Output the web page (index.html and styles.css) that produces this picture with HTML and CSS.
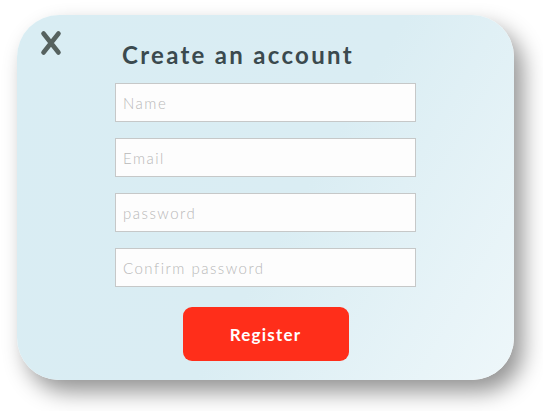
FILE: index.html
```html
<!DOCTYPE html>
<html>
<head>
<meta charset="utf-8">
<link rel="stylesheet" href="styles.css">
</head>
<body>
<div class="card">
  <button class="close" aria-label="Close">
    <svg width="22" height="26" viewBox="0 0 22 26"><path d="M3.5 3.5 L18.5 22.5 M18.5 3.5 L3.5 22.5" stroke="#56625f" stroke-width="4.6" stroke-linecap="round" fill="none"/></svg>
  </button>
  <h1 class="title">Create an account</h1>
  <form class="form">
    <input class="field" type="text" placeholder="Name">
    <input class="field" type="text" placeholder="Email">
    <input class="field" type="password" placeholder="password">
    <input class="field" type="password" placeholder="Confirm password">
    <button class="register" type="button">Register</button>
  </form>
</div>
</body>
</html>
```
FILE: styles.css
```css
html, body {
  margin: 0;
  padding: 0;
  background: #ffffff;
  font-family: Lato, "Open Sans", sans-serif;
}
body {
  min-height: 411px;
  overflow: hidden;
}
.card {
  position: relative;
  margin: 15px 0 0 17px;
  width: 497px;
  height: 365px;
  box-sizing: border-box;
  border-radius: 42px;
  background: linear-gradient(120deg, #d9edf3 0%, #daedf3 55%, #eef7fa 100%);
  box-shadow: 9px 12px 22px rgba(0, 0, 0, 0.42);
  padding-top: 25px;
}
.close {
  position: absolute;
  left: 23px;
  top: 15px;
  padding: 0;
  border: 0;
  background: none;
  line-height: 0;
}
.title {
  margin: 0 0 0 105px;
  font-size: 24px;
  font-weight: 700;
  letter-spacing: 2.3px;
  color: #3b4a4e;
  line-height: 30px;
}
.form {
  display: flex;
  flex-direction: column;
  align-items: center;
  gap: 16px;
  margin-top: 13px;
}
.field {
  width: 301px;
  height: 39px;
  box-sizing: border-box;
  border: 1px solid #c6c8c8;
  background: #fdfdfd;
  padding: 0 7px;
  font-family: Lato, sans-serif;
  font-weight: 300;
  font-size: 15px;
  letter-spacing: 1.5px;
  outline: none;
}
.field::placeholder {
  color: #b8b8b8;
}
.register {
  margin-top: 4px;
  width: 166px;
  height: 54px;
  border: 0;
  border-radius: 9px;
  background: #ff2e1a;
  color: #ffffff;
  font-family: Lato, sans-serif;
  font-weight: 700;
  font-size: 17px;
  letter-spacing: 1.2px;
}
```
